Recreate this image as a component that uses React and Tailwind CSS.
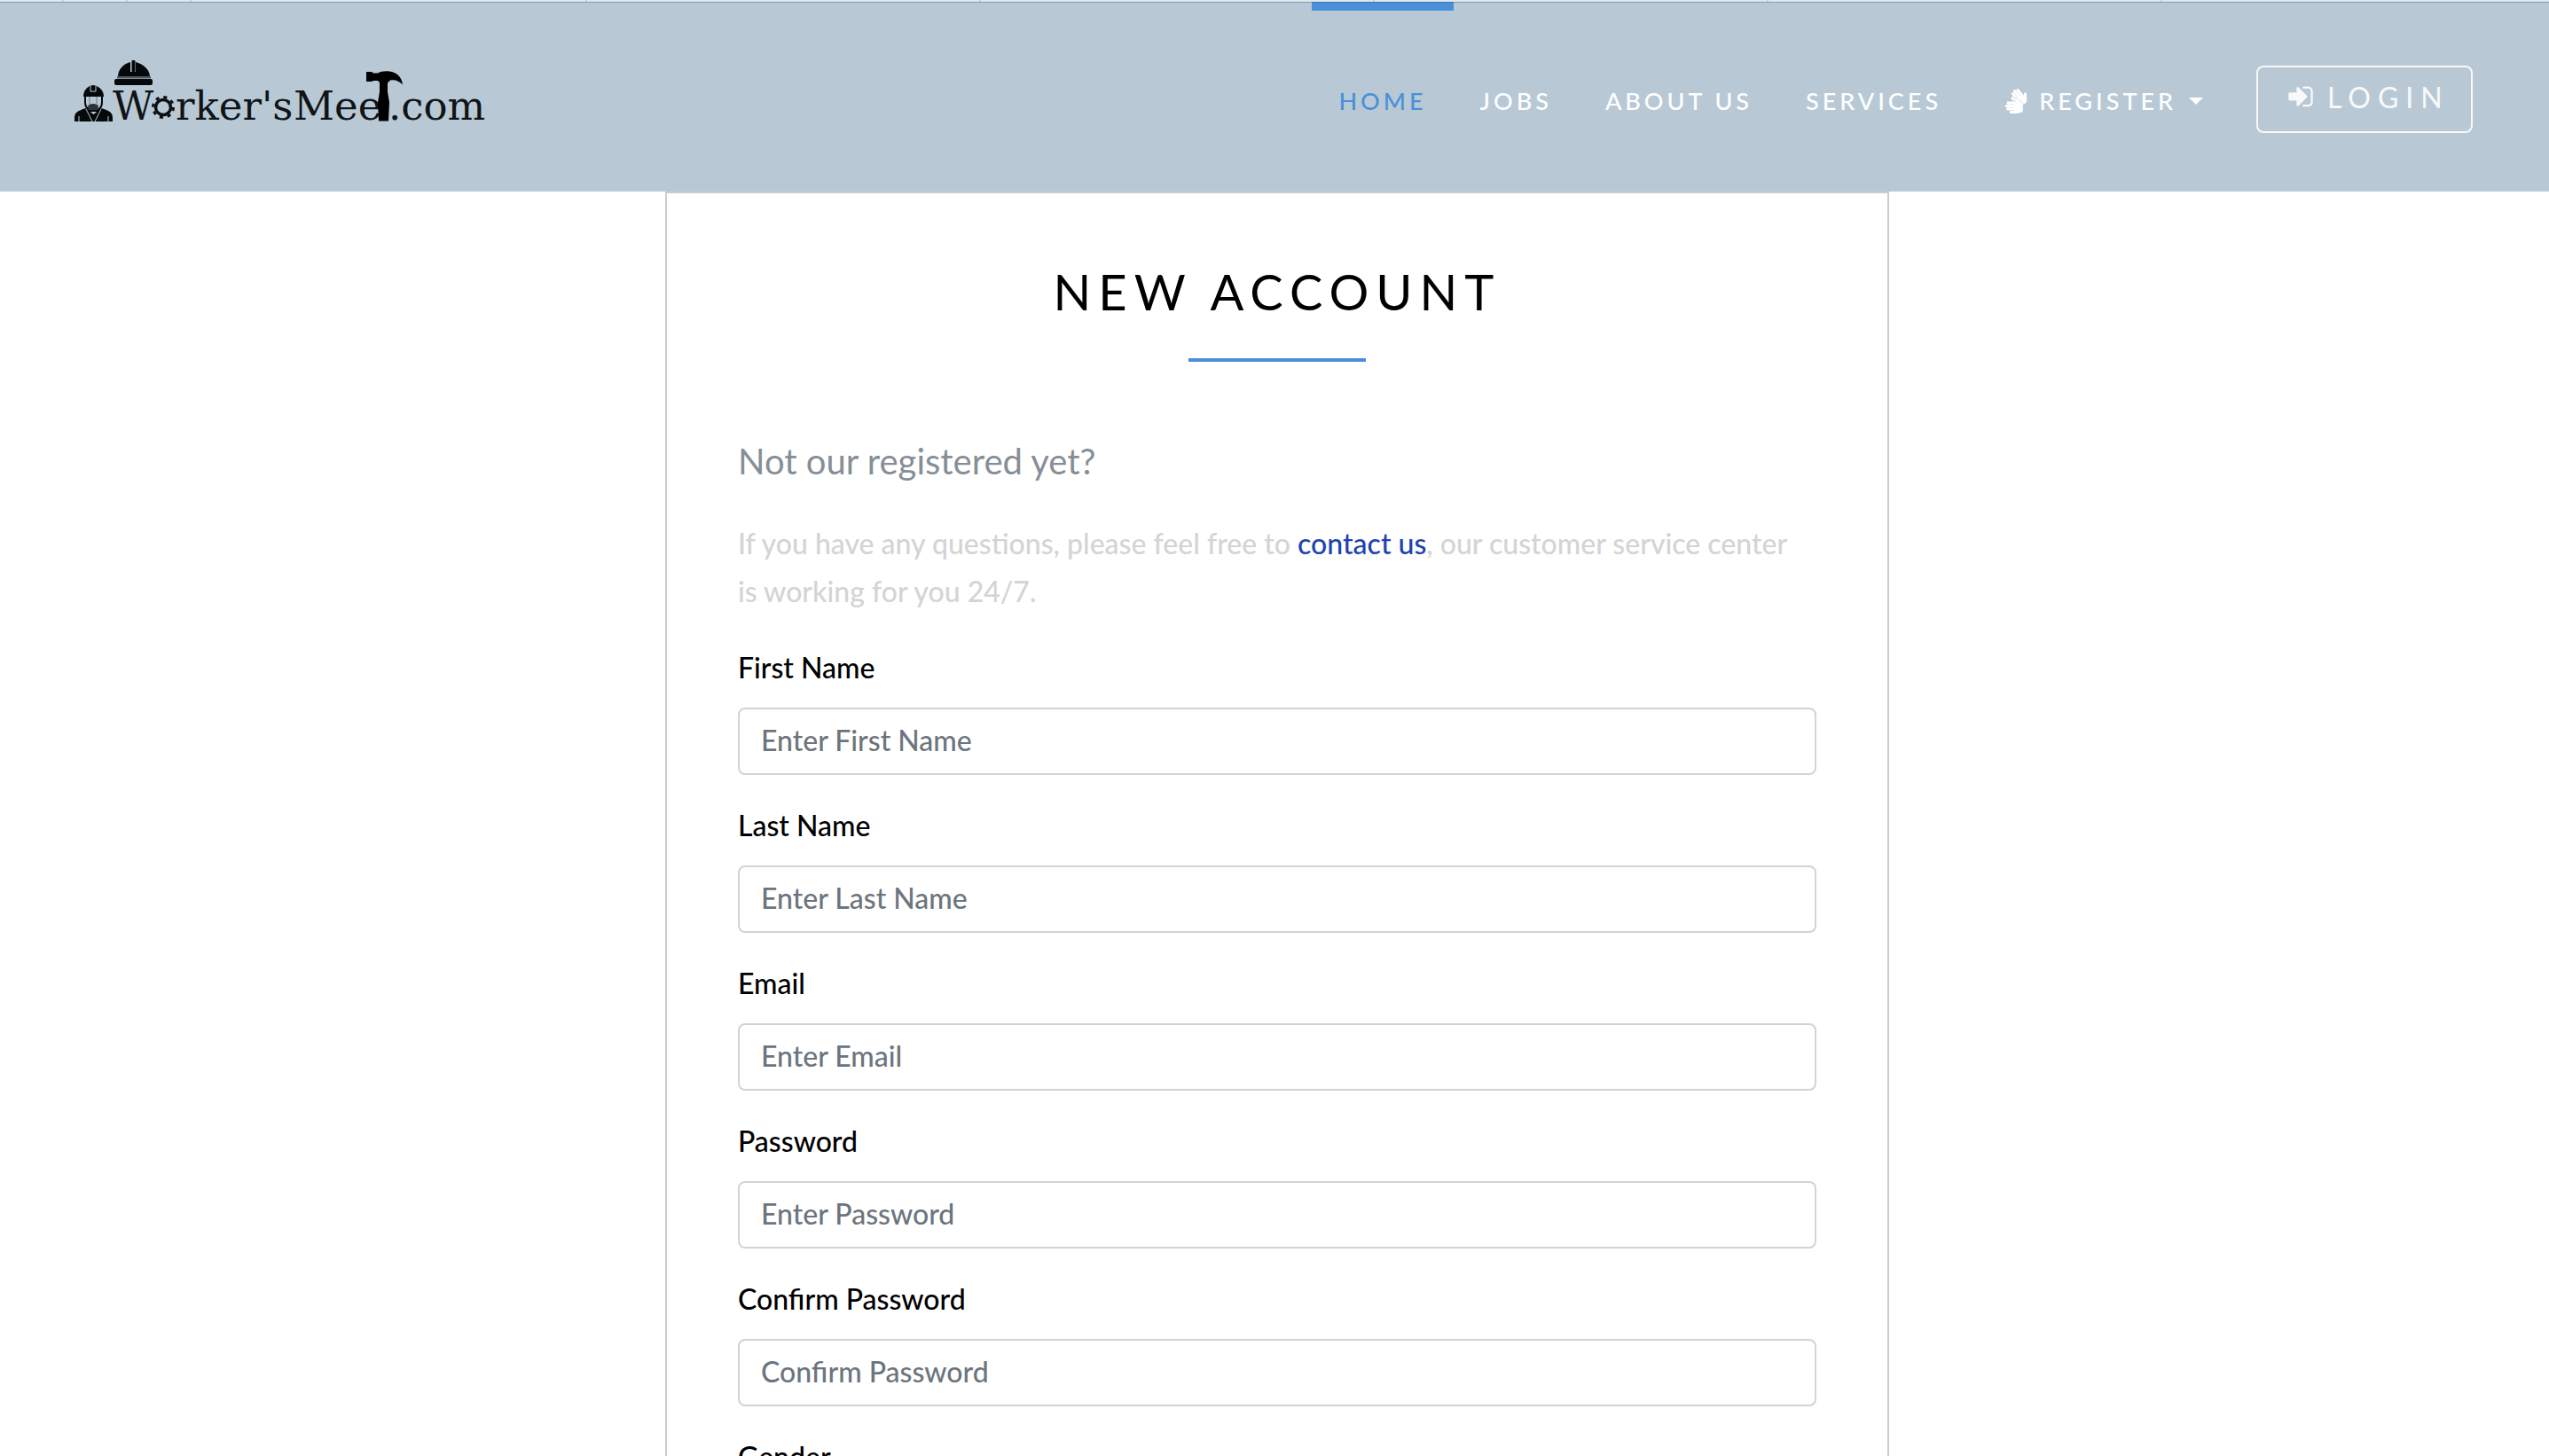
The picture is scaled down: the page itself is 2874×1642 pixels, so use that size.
import React from "react";
import { FaSignLanguage } from "react-icons/fa";

const topTicks = ["w-[72px]", "w-[72px]", "w-[72px]", "w-[446px]", "w-[444px]", "w-[444px]", "w-[444px]", "w-[444px]"];

const links = [
  { label: "HOME", active: true },
  { label: "JOBS" },
  { label: "ABOUT US" },
  { label: "SERVICES" },
];

const fields = [
  { id: "first-name", label: "First Name", placeholder: "Enter First Name", type: "text" },
  { id: "last-name", label: "Last Name", placeholder: "Enter Last Name", type: "text" },
  { id: "email", label: "Email", placeholder: "Enter Email", type: "email" },
  { id: "password", label: "Password", placeholder: "Enter Password", type: "password" },
  { id: "confirm", label: "Confirm Password", placeholder: "Confirm Password", type: "password" },
];

function BrandMark() {
  return (
    <svg viewBox="84 62 480 100" className="h-[100px] w-[480px]" role="img" aria-label="Worker'sMeet.com">
      <g fill="#101416" fontFamily="'DejaVu Serif', serif" fontSize="45">
        <text x="127" y="135">W</text>
        <text x="198" y="135">rker's</text>
        <text x="331" y="135">Mee</text>
        <text x="438" y="135">.com</text>
      </g>
      <g fill="#06090b">
        {/* worker bust */}
        <path d="M94 109c0-8 5-12 11-13 6 1 12 5 12 13z" />
        <path d="M95 109h2v6c0 6 4 9 8.500 9s8.500-3 8.500-9v-6h2v6c0 4-1 6-3 8v3h-15v-3c-2-2-3-4-3-8z" />
        <path d="M84 137v-4c0-6 3-8 13-11l8.500 7 8.500-7c10 3 13 5 13 11v4z" />
        {/* hard hat */}
        <path d="M133 87c0-9 6-15 14-17v11h6V70c8 2 16 8 16 17z" />
        <rect x="148.500" y="68" width="4" height="13" rx="1" />
        <rect x="129" y="89" width="43" height="7" rx="2" />
      </g>
      <path d="M97.500 109h15v6c0 4-3 7-7.500 7s-7.500-3-7.500-7z" fill="#b8c9d5" />
      <path d="M99 120c1-4 11-4 12 0l-1 4h-10z" fill="#2b3238" />
      <path d="M101 109v9M109 109v9" stroke="#6d7a84" strokeWidth="1" />
      <rect x="132" y="86" width="38" height="2.500" fill="#4d5860" />
      <path d="M102 97v6h6v-6M89 137v-6M122 137v-6M97 123l7 14M114 123l-7 14" fill="none" stroke="#b8c9d5" strokeWidth="1" />
      {/* gear */}
      <g stroke="#0c1013" fill="none">
        <circle cx="184" cy="121" r="8.500" strokeWidth="3.500" />
        <circle cx="184" cy="121" r="11.500" strokeWidth="3" strokeDasharray="4 5.030" />
      </g>
      {/* hammer */}
      <path
        fill="#000"
        d="M413 81h6l2 1.500h5c3-2 8-2.500 13-2 8 1 14 6 15 15-4-4-8-6-14-5l-3 3v10l2 12-1 21h-11l-1-21 2-12V93l-2-2h-5l-2 1h-6z"
      />
    </svg>
  );
}

function SignInIcon() {
  return (
    <svg viewBox="0 0 1536 1792" className="h-8 w-7" fill="currentColor" aria-hidden="true">
      <path d="M1184 832q0 26-19 45l-544 544q-19 19-45 19t-45-19-19-45v-288h-448q-26 0-45-19t-19-45v-384q0-26 19-45t45-19h448v-288q0-26 19-45t45-19 45 19l544 544q19 19 19 45zm352-352v704q0 119-84.500 203.500t-203.500 84.500h-320q-13 0-22.500-9.500t-9.500-22.500q0-4-1-20t-.5-26.500 3-23.500 10-19.500 20.500-6.500h320q66 0 113-47t47-113v-704q0-66-47-113t-113-47h-312l-11.500-1-11.500-3-8-5.500-7-9-2-13.500q0-4-1-20t-.5-26.500 3-23.500 10-19.500 20.500-6.500h320q119 0 203.500 84.500t84.500 203.500z" />
    </svg>
  );
}

export default function App() {
  return (
    <div className="min-h-screen bg-white font-['Lato',sans-serif]">
      <div className="flex h-0.5 overflow-hidden bg-[#e4e7e8]" aria-hidden="true">
        {topTicks.map((w, i) => (
          <div key={i} className={`${w} shrink-0 border-r-2 border-[#cdd0d2]`} />
        ))}
      </div>
      <header className="relative flex h-[214px] justify-between bg-[#b8c9d5] pr-[86px] pl-[84px]">
        <div className="absolute inset-x-0 top-0 h-px bg-[#004080]/30" />
        <a href="#" className="mt-[60px] self-start">
          <BrandMark />
        </a>
        <nav className="flex items-stretch text-[27px] leading-[54px] font-medium tracking-[4px] text-white">
          {links.map((l) => (
            <a
              key={l.label}
              href="#"
              className={
                l.active
                  ? "border-t-10 border-[#4a90d9] px-[30px] pt-[75px] text-[#4a90d9]"
                  : "border-t-10 border-transparent px-[30px] pt-[75px]"
              }
            >
              {l.label}
            </a>
          ))}
          <button type="button" className="mt-[85px] flex h-[54px] items-center self-start pr-[60px] pl-10 tracking-[4px]">
            <FaSignLanguage className="mr-3 size-7" />
            REGISTER
            <span className="ml-3.5 border-x-8 border-t-8 border-x-transparent border-t-white" />
          </button>
          <button
            type="button"
            className="mt-[72px] flex h-[76px] w-[244px] items-center self-start rounded-lg border-2 border-[#f8f9fa] pb-1 pl-[34px] text-[32px] font-normal tracking-[8px] text-[#f8f9fa]"
          >
            <span className="mr-4">
              <SignInIcon />
            </span>
            LOGIN
          </button>
        </nav>
      </header>
      <main className="pl-1.5">
        <section className="mx-auto max-w-[1380px] border-2 border-[#cccccc] px-20 pt-[75px] pb-20">
          <h1 className="text-center text-[56px] leading-[72px] tracking-[8px] text-black">NEW ACCOUNT</h1>
          <div className="mx-auto mt-[39px] h-1 w-[200px] bg-[#4a90d9]" />
          <p className="mt-[78px] text-[40px] leading-[68px] text-[#868e96]">Not our registered yet?</p>
          <p className="mt-8 pr-4 text-[32px] leading-[54px] font-medium text-[#d4d4d4]">
            If you have any questions, please feel free to{" "}
            <a href="#" className="text-[#1d43b2]">
              contact us
            </a>
            , our customer service center is working for you 24/7.
          </p>
          <form className="mt-8">
            {fields.map((f) => (
              <div key={f.id} className="mb-[30px]">
                <label htmlFor={f.id} className="mb-[18px] block text-[32px] leading-[54px] font-medium text-black">
                  {f.label}
                </label>
                <input
                  id={f.id}
                  type={f.type}
                  placeholder={f.placeholder}
                  className="block h-[76px] w-full rounded-lg border-2 border-[#ced4da] bg-white px-6 pb-1 text-[32px] font-medium placeholder:text-[#6c757d]"
                />
              </div>
            ))}
            <p className="text-[32px] leading-[54px] font-medium text-black">Gender</p>
          </form>
        </section>
      </main>
    </div>
  );
}
